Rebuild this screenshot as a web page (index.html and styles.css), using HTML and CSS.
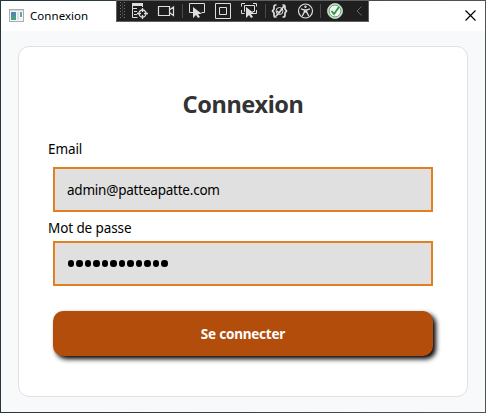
FILE: index.html
```html
<!DOCTYPE html>
<html lang="fr">
<head>
<meta charset="utf-8">
<title>Connexion</title>
<link rel="stylesheet" href="styles.css">
</head>
<body>
<div class="window">
  <header class="titlebar">
    <svg class="app-icon" width="15" height="13" viewBox="0 0 15 13"><path fill="#a9adb2" d="M0 0h15v13H0z"/><path fill="#f3f5f7" d="M1 2h13v10H1z"/><path fill="#d5d8dc" d="M1 1h13v1H1z"/><path fill="#5487b0" d="M2 3h5v4H2z"/><path fill="#4c9b83" d="M2 7h5v4H2z"/><path fill="#dce1e5" d="M8 3h2v8H8z"/><path fill="#69a899" d="M11 3h2v5h-2z"/></svg>
    <span class="window-title">Connexion</span>
    <svg class="close" width="11" height="11" viewBox="0 0 11 11"><path d="M.5.5l10 10M10.500.5l-10 10" stroke="#000" stroke-width="1.2"/></svg>
  </header>
  <main class="content">
    <form class="card">
      <h1>Connexion</h1>
      <label class="email-label"><span>Email</span></label>
      <div class="field"><span class="email">admin@patteapatte.com</span></div>
      <label class="password-label"><span>Mot de passe</span></label>
      <div class="field"><span class="password"><i></i><i></i><i></i><i></i><i></i><i></i><i></i><i></i><i></i><i></i><i></i><i></i></span></div>
      <button type="button"><span>Se connecter</span></button>
    </form>
  </main>
</div>
<div class="toolbar">
  <svg width="253" height="22" viewBox="116 0 253 22" fill="none" stroke="#dedede">
    <path stroke="#777" stroke-dasharray="1 2" d="M120.500 2v17M124.500 2v17"/>
    <path stroke="#777" stroke-dasharray="1 2" d="M122.500 3.500v15"/>
    <path d="M132.500 4v13.500h5M132 8.500h5M134 11.500h3M134 14.500h3M142.500 4v3"/><path stroke-width="3" d="M132 4.500h11"/>
    <circle cx="142.500" cy="13.500" r="3.500" stroke-width="1.300"/><path stroke-width="1.300" d="M142.500 8v4M142.500 15v4M137 13.500h4M144 13.500h4"/>
    <path stroke-width="1.200" d="M158.500 6.500h11v9h-11zM169.500 10l4-3v8.500l-4-3"/>
    <path stroke="#494949" d="M182.500 4v14M265.500 4v14M320.500 4v14"/>
    <path d="M193 12.500h-3.500v-9h15v9h-3"/><path fill="#dedede" stroke="none" d="M193 7v11l3-3 2 3 2-1-2-3h4z"/>
    <path d="M215.500 3.500h15v15h-15zM219.500 7.500h7v7h-7z"/>
    <path d="M245 3.500h-3.500v3M253 3.500h3.500v3M241.500 10v3.500h3M256.500 10v3.500h-3M245 11.500h-.500v-6h10v6h-2"/><path fill="#dedede" stroke="none" d="M246 7v11l3-3 2 3 2-1-2-3h4z"/>
    <path stroke-width="1.700" d="M276.500 5h-1q-1.500 0-1.500 2v2l-1.500 2 1.500 2v2q0 2 1.500 2h1M282.500 5h1q1.500 0 1.500 2v2l1.500 2-1.500 2v2q0 2-1.500 2h-1"/><circle cx="279.500" cy="11" r="3.500"/><path stroke-width="1.700" d="M277 11l2 2 5-7M276 16l2-2"/>
    <circle cx="305.500" cy="11" r="7" stroke-width="1.200"/><circle cx="305.500" cy="6.800" r="1.200" fill="#dedede" stroke="none"/><path stroke-width="1.300" d="M301 8.800l3.300 1.200v2l-2 4M310 8.800l-3.300 1.200v2l2 4M304 10h3M304.300 12.500l1.200-1 1.200 1"/>
    <circle cx="335" cy="11" r="7.500" fill="#f2f5f2" stroke="#b9c5b9"/><circle cx="335" cy="11" r="6" stroke="#45a357"/><path stroke="#279544" stroke-width="1.800" d="M331.500 11l2.500 3 5-7"/>
    <path stroke="#666" d="M361.500 6.500l-4.500 4.500 4.500 4.500"/>
  </svg>
</div>
</body>
</html>
```
FILE: styles.css
```css
* { box-sizing: border-box; }
body {
  margin: 0;
  height: 413px;
  padding: 1px;
  overflow: hidden;
  background: linear-gradient(90deg, #253640, #35423b 45%, #50564f);
  color: #000;
  font-family: "Noto Sans", sans-serif;
}
.window { height: 411px; display: flex; flex-direction: column; background: #f8f9fb; }
.titlebar { height: 30px; display: flex; align-items: center; padding: 0 9px 2px 8px; background: #fff; }
.window-title { flex: 1; margin-left: 6px; padding-top: 2px; font-size: 11.5px; line-height: 16px; letter-spacing: 0.05px; }
.close { margin-top: 0; }
.content { flex: 1; padding: 15px 17px 15px; }
.card { height: 351px; padding: 0 34px; border: 1px solid #dfe1e4; border-radius: 11px; background: #fff; }
h1 { margin: 39px 0 0; height: 37px; text-align: center; font-size: 23.5px; line-height: 36px; letter-spacing: -0.4px; color: #333; }
label { display: block; margin-left: -5px; font-size: 13.5px; line-height: 20px; letter-spacing: -0.1px; }
.email-label { margin-top: 16px; height: 28px; }
.password-label { height: 29px; padding-top: 6px; }
.field { height: 45px; display: flex; align-items: center; padding: 0 12px; border: 2px solid #e08020; background: #e0e0e0; }
.email { font-size: 13.5px; letter-spacing: -0.22px; }
.password { display: flex; gap: 2px; padding-left: 0.5px; }
.password i { width: 6.5px; height: 6.5px; border-radius: 50%; background: #000; }
button {
  display: block;
  width: 100%;
  height: 45px;
  margin-top: 25px;
  padding: 1px 0 0;
  border: 0;
  border-radius: 10px;
  background: #b24d0b;
  color: #fff;
  font: bold 13.5px "Noto Sans", sans-serif;
  letter-spacing: -0.22px;
  box-shadow: 3px 3px 5px #000;
}
.toolbar { position: absolute; left: 116px; top: 0; width: 253px; height: 22px; background: #1f1f1f; box-shadow: inset 0 0 0 1px #606060; }
.toolbar svg { display: block; }
```
